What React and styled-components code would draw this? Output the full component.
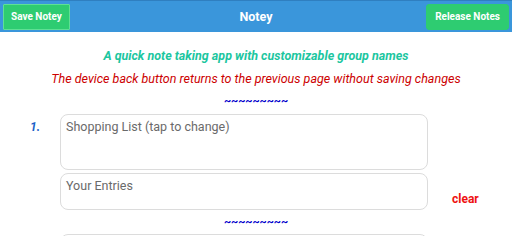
import React from 'react';
import styled, { createGlobalStyle } from 'styled-components';

const Global = createGlobalStyle`
  html, body { margin: 0; padding: 0; background: #ffffff; }
  body { font-family: Roboto, "Liberation Sans", sans-serif; overflow: hidden; }
`;

const Page = styled.div`
  width: 512px;
  height: 236px;
  overflow: hidden;
`;

const Header = styled.header`
  height: 32px;
  box-sizing: border-box;
  background: #3a96db;
  border-top: 1px solid #2f7fc0;
  display: grid;
  grid-template-columns: 1fr auto 1fr;
  align-items: center;
  padding: 0 3px;
`;

const HeadButton = styled.button`
  justify-self: ${(p) => (p.$right ? 'end' : 'start')};
  height: 26px;
  padding: 0 ${(p) => (p.$right ? 8 : 7)}px;
  background: #2ecc71;
  color: #ffffff;
  font-family: Roboto, "Liberation Sans", sans-serif;
  font-weight: 700;
  font-size: 10px;
  border: 1px solid ${(p) => (p.$right ? '#2ecc71' : '#5fe094')};
  border-radius: ${(p) => (p.$right ? 3 : 1)}px;
`;

const Title = styled.h1`
  margin: 0;
  color: #ffffff;
  font-size: 12.5px;
  font-weight: 700;
`;

const Body = styled.main`
  display: flex;
  flex-direction: column;
  align-items: center;
  padding-top: 12px;
`;

const Line = styled.p`
  margin: 0;
  font-style: italic;
  font-size: 12.5px;
  font-weight: ${(p) => (p.$bold ? 700 : 400)};
  color: ${(p) => p.$color};
  line-height: 23px;
`;

const Tildes = styled.div`
  color: #0000cc;
  font-weight: 700;
  font-size: 11px;
  line-height: 12px;
  margin: ${(p) => p.$m};
`;

const NoteRow = styled.div`
  align-self: stretch;
  display: grid;
  grid-template-columns: 60px 368px 1fr;
  align-items: start;
`;

const Number = styled.span`
  justify-self: start;
  margin: 6px 0 0 30px;
  color: #1a5fc7;
  font-style: italic;
  font-weight: 700;
  font-size: 12px;
`;

const Field = styled.div`
  box-sizing: border-box;
  height: ${(p) => p.$h}px;
  margin-top: ${(p) => p.$mt || 0}px;
  border: 1px solid #dcdcdc;
  border-radius: 8px;
  padding: 4px 5px;
  color: #6a6a6a;
  font-size: 12.5px;
  line-height: 16px;
`;

const Clear = styled.span`
  align-self: center;
  margin: 18px 0 0 24px;
  color: #ee1111;
  font-weight: 700;
  font-size: 12px;
`;

export default function App() {
  return (
    <Page>
      <Global />
      <Header>
        <HeadButton>Save Notey</HeadButton>
        <Title>Notey</Title>
        <HeadButton $right>Release Notes</HeadButton>
      </Header>
      <Body>
        <Line $bold $color="#1cc69f">A quick note taking app with customizable group names</Line>
        <Line $color="#cc0000">The device back button returns to the previous page without saving changes</Line>
        <Tildes $m="5px 0 7px">~~~~~~~~~</Tildes>
        <NoteRow>
          <Number>1.</Number>
          <Field $h={56}>Shopping List (tap to change)</Field>
          <span />
          <span />
          <Field $h={37} $mt={3}>Your Entries</Field>
          <Clear>clear</Clear>
        </NoteRow>
        <Tildes $m="6px 0 6px">~~~~~~~~~</Tildes>
        <NoteRow>
          <span />
          <Field $h={40} />
        </NoteRow>
      </Body>
    </Page>
  );
}
